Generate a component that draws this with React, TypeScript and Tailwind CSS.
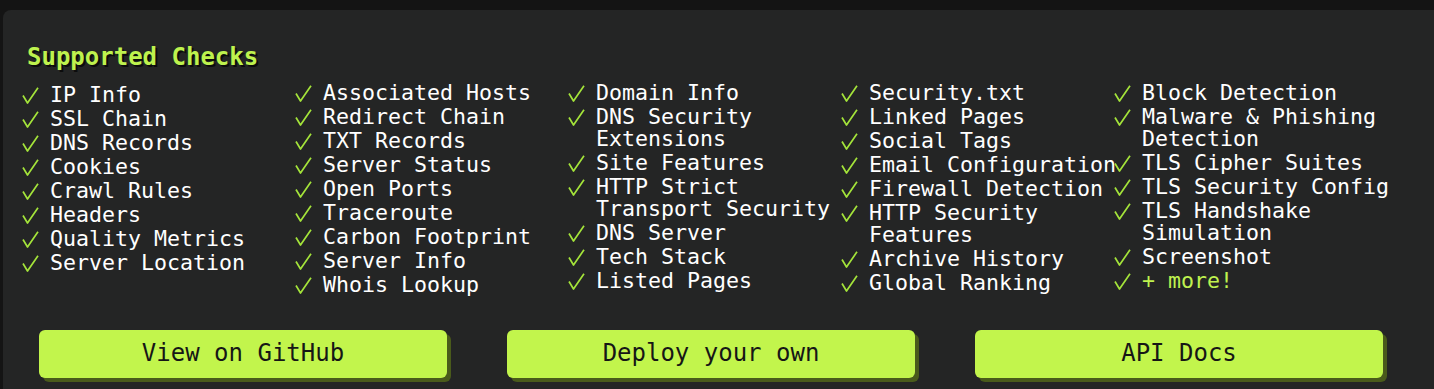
const columns: string[][] = [
  ['IP Info', 'SSL Chain', 'DNS Records', 'Cookies', 'Crawl Rules', 'Headers', 'Quality Metrics', 'Server Location'],
  ['Associated Hosts', 'Redirect Chain', 'TXT Records', 'Server Status', 'Open Ports', 'Traceroute', 'Carbon Footprint', 'Server Info', 'Whois Lookup'],
  ['Domain Info', 'DNS Security Extensions', 'Site Features', 'HTTP Strict Transport Security', 'DNS Server', 'Tech Stack', 'Listed Pages'],
  ['Security.txt', 'Linked Pages', 'Social Tags', 'Email Configuration', 'Firewall Detection', 'HTTP Security Features', 'Archive History', 'Global Ranking'],
  ['Block Detection', 'Malware & Phishing Detection', 'TLS Cipher Suites', 'TLS Security Config', 'TLS Handshake Simulation', 'Screenshot'],
];

const buttons = ['View on GitHub', 'Deploy your own', 'API Docs'];

function CheckItem({ label, more }: { label: string; more?: boolean }) {
  return (
    <li className="mb-[2px] flex items-start">
      <span className="flex h-[22px] w-[28px] shrink-0 items-center">
        {/* thin tick, like the fallback glyph in the original */}
        <svg width="17" height="17" viewBox="0 0 17 17" className="text-[#a4e43a]">
          <path d="M1 8.5 L5.5 16 L16 0.8" fill="none" stroke="currentColor" strokeWidth="1.7" strokeLinejoin="round" />
        </svg>
      </span>
      <span className={more ? 'mr-[-6px] text-[#bff24f]' : 'mr-[-6px] text-white'}>{label}</span>
    </li>
  );
}

export default function App() {
  return (
    <div className="min-h-[389px] w-full bg-[#141414] pt-[10px] pl-[3px] font-['DejaVu_Sans_Mono',monospace] overflow-hidden">
      <div className="min-h-[379px] rounded-tl-[8px] bg-[#242525] pl-[19px] pt-[31px]">
        <h2 className="ml-[5px] text-[24px] leading-[32px] font-bold text-[#bef24e] [text-shadow:2px_2px_0px_#0c0c0c]">
          Supported Checks
        </h2>

        <div className="mt-[9px] grid grid-cols-[273px_273px_273px_273px_1fr] text-[21.6px] leading-[22px]">
          {columns.map((col, i) => (
            <ul key={i} className={i === 0 ? 'flex flex-col pt-[2px]' : 'flex flex-col'}>
              {col.map((item) => (
                <CheckItem key={item} label={item} />
              ))}
              {i === 4 && <CheckItem label="+ more!" more />}
            </ul>
          ))}
        </div>

        <div className="mt-[32px] flex gap-[60px] pl-[17px]">
          {buttons.map((b) => (
            <button
              key={b}
              className="h-[48px] w-[408px] rounded-[6px] bg-[#c2f54c] pb-[2px] text-[24px] text-[#161616] shadow-[4px_4px_0px_#4a5b1b] font-['DejaVu_Sans_Mono',monospace]"
            >
              {b}
            </button>
          ))}
        </div>
      </div>
    </div>
  );
}
